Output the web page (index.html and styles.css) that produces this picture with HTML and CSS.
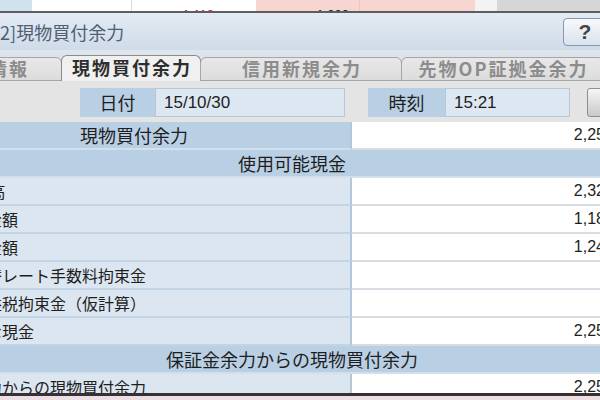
FILE: index.html
```html
<!DOCTYPE html>
<html lang="ja">
<head>
<meta charset="utf-8">
<title>現物買付余力</title>
<link rel="stylesheet" href="styles.css">
</head>
<body>
<div class="under">
  <div class="uc uc1"></div>
  <div class="uc uc2"></div>
  <div class="uc uc3">-1,118</div>
  <div class="uc uc4">1,000</div>
  <div class="uc uc5"></div>
  <div class="uc uc6"></div>
  <div class="uc uc7"></div>
</div>
<div class="window">
  <div class="titlebar">
    <span class="title">[2]現物買付余力</span>
    <div class="help">?</div>
  </div>
  <div class="tabs">
    <div class="tab tab1">余力情報</div>
    <div class="tab active">現物買付余力</div>
    <div class="tab tab3">信用新規余力</div>
    <div class="tab tab4">先物OP証拠金余力</div>
  </div>
  <div class="panel">
    <div class="daterow">
      <div class="dlab">日付</div>
      <div class="dval dv1">15/10/30</div>
      <div class="dgap"></div>
      <div class="dlab dlab2">時刻</div>
      <div class="dval dv2">15:21</div>
      <div class="dbtn"></div>
    </div>
    <div class="grid">
      <div class="lab hlab">現物買付余力</div><div class="val">2,258,520</div>
      <div class="head">使用可能現金</div>
      <div class="lab">預り金 残高</div><div class="val">2,324,688</div>
      <div class="lab">当日買付金額</div><div class="val">1,187,300</div>
      <div class="lab">当日売付金額</div><div class="val">1,249,132</div>
      <div class="lab">米国株為替レート手数料拘束金</div><div class="val"></div>
      <div class="lab">源泉譲渡益税拘束金（仮計算）</div><div class="val"></div>
      <div class="lab">使用可能な現金</div><div class="val">2,258,520</div>
      <div class="head">保証金余力からの現物買付余力</div>
      <div class="lab">保証金余力からの現物買付余力</div><div class="val">2,258,520</div>
    </div>
  </div>
</div>
</body>
</html>
```
FILE: styles.css
```css
* { box-sizing: border-box; }
html, body { margin: 0; padding: 0; }
body {
  width: 600px;
  height: 400px;
  overflow: hidden;
  background: #ecdfe3;
  font-family: "Noto Sans CJK JP", sans-serif;
  color: #1e1e1e;
}

/* window behind (top strip) */
.under { display: flex; height: 11px; overflow: hidden; }
.uc {
  flex: none;
  height: 11px;
  overflow: hidden;
  padding-top: 8px;
  font: 13px/13px "Liberation Sans", sans-serif;
  text-align: right;
}
.uc1 { width: 32px; background: #cfe2ee; }
.uc2 { width: 100px; background: #fff; border-right: 1px solid #dcdcdc; }
.uc3 { width: 124px; background: #fff; padding-right: 42px; color: #d01010; }
.uc4 { width: 104px; background: #f7d5d0; padding-right: 10px; color: #222; border-right: 1px solid #efc4be; }
.uc5 { width: 115px; background: #f7d5d0; }
.uc6 { width: 22px; background: #f3f3f3; }
.uc7 { flex: 1; background: #d6d6d6; }

/* window */
.window { border-top: 2px solid #5e5e5e; border-bottom: 3px solid #3a2f33; }
.titlebar {
  height: 37px;
  display: flex;
  align-items: center;
  justify-content: space-between;
  background: linear-gradient(#e3ebf4, #cfdbe8);
}
.title {
  font-size: 18px;
  line-height: 20px;
  color: #4f5e73;
  margin-left: -6px;
  white-space: nowrap;
}
.help {
  flex: none;
  width: 44px;
  height: 28px;
  margin-right: -7px;
  border: 1px solid #8598b0;
  border-radius: 4px;
  background: linear-gradient(#f7f9fc, #d9e2ec);
  font: bold 21px/26px "Liberation Sans", sans-serif;
  color: #454545;
  text-align: center;
}

/* tabs */
.tabs {
  height: 31px;
  display: flex;
  align-items: flex-end;
  background: linear-gradient(#dde5ed, #d9dde2);
}
.tab {
  flex: none;
  height: 24px;
  border: 1px solid #a5a5a5;
  border-radius: 6px 6px 0 0;
  background: linear-gradient(#e8e8e8, #dcdcdc);
  font-size: 18px;
  font-weight: bold;
  letter-spacing: 2px;
  line-height: 21px;
  text-align: center;
  padding-left: 2px;
  color: #8c8c8c;
  white-space: nowrap;
  overflow: hidden;
}
.tab1 { width: 148px; margin-left: -86px; }
.active {
  width: 140px;
  height: 26px;
  line-height: 23px;
  border-color: #8a8a8a;
  border-bottom: none;
  background: #f0f0f0;
  color: #2e2e2e;
  margin-left: -1px;
}
.tab3 { width: 202px; margin-left: -1px; }
.tab4 { width: 203px; margin-left: -1px; }

/* panel */
.panel {
  height: 312px;
  overflow: hidden;
  background: #e4e4e4;
  padding-top: 7px;
}
.daterow { display: flex; height: 29px; margin-left: 80px; }
.daterow > div { flex: none; }
.dlab {
  width: 75px;
  background: #b9cfe4;
  font-size: 18px;
  line-height: 29px;
  text-align: center;
}
.dval {
  background: #dce7f2;
  border: 1px solid #b6c7d9;
  font: 17px/27px "Liberation Sans", sans-serif;
  padding-left: 8px;
}
.dv1 { width: 190px; }
.dgap { width: 23px; }
.dlab2 { width: 77px; }
.dv2 { width: 125px; }
.dbtn {
  width: 40px;
  margin-left: 17px;
  border: 1px solid #8e8e8e;
  border-radius: 3px;
  background: linear-gradient(#f6f6f6, #c9c9c9);
}

.grid {
  margin-top: 5px;
  margin-left: -82px;
  width: 748px;
  display: grid;
  grid-template-columns: 434px 314px;
}
.lab, .val, .head { height: 28px; white-space: pre; overflow: hidden; }
.lab {
  background: #dce6f0;
  border-bottom: 2px solid #c3d4e5;
  border-right: 2px solid #b3c7db;
  font-size: 16px;
  line-height: 26px;
  padding-left: 5px;
  text-indent: -1px;
}
.hlab {
  background: #b9cfe4;
  border-bottom-color: #d3dfeb;
  text-align: center;
  font-size: 18px;
  padding-left: 0;
  text-indent: 0;
}
.val {
  background: #fff;
  border-bottom: 2px solid #d9dde3;
  text-align: right;
  padding-right: 21px;
  font: 16px/26px "Liberation Sans", sans-serif;
}
.head {
  grid-column: 1 / 3;
  background: #b9cfe4;
  border-bottom: 2px solid #d3dfeb;
  text-align: center;
  font-size: 18px;
  line-height: 26px;
}
```
